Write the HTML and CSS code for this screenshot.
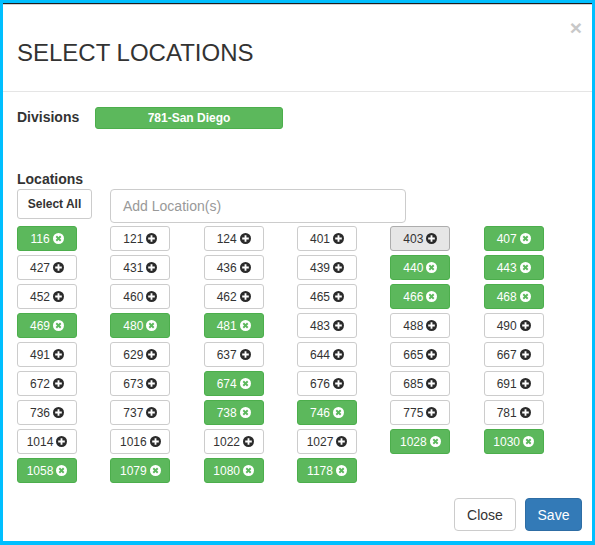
FILE: index.html
```html
<!DOCTYPE html>
<html>
<head>
<meta charset="utf-8">
<link rel="stylesheet" href="styles.css">
</head>
<body>
<svg class="defs" width="0" height="0" aria-hidden="true">
  <symbol id="plus" viewBox="0 0 12 12"><circle cx="6" cy="6" r="6" fill="#2a2a2a"/><path d="M5 2.4h2v2.6h2.6v2H7v2.6H5V7H2.4V5H5z" fill="#fff"/></symbol>
  <symbol id="rem" viewBox="0 0 12 12"><circle cx="6" cy="6" r="6" fill="#fff"/><path d="M3.6 3.6l4.8 4.8M8.4 3.6l-4.8 4.8" stroke="#5cb85c" stroke-width="2.1"/></symbol>
</svg>
<div class="modal">
  <div class="modal-header">
    <h4 class="modal-title">SELECT LOCATIONS</h4>
    <span class="close">&times;</span>
  </div>
  <div class="modal-body">
    <div class="div-row">
      <span class="label div-label">Divisions</span>
      <span class="btn-division">781-San Diego</span>
    </div>
    <div class="label loc-label">Locations</div>
    <div class="controls">
      <span class="btn-select">Select All</span>
      <div class="input">Add Location(s)</div>
    </div>
    <div class="grid">
      <span class="chip on">116<svg><use href="#rem"/></svg></span>
      <span class="chip">121<svg><use href="#plus"/></svg></span>
      <span class="chip">124<svg><use href="#plus"/></svg></span>
      <span class="chip">401<svg><use href="#plus"/></svg></span>
      <span class="chip active">403<svg><use href="#plus"/></svg></span>
      <span class="chip on">407<svg><use href="#rem"/></svg></span>

      <span class="chip">427<svg><use href="#plus"/></svg></span>
      <span class="chip">431<svg><use href="#plus"/></svg></span>
      <span class="chip">436<svg><use href="#plus"/></svg></span>
      <span class="chip">439<svg><use href="#plus"/></svg></span>
      <span class="chip on">440<svg><use href="#rem"/></svg></span>
      <span class="chip on">443<svg><use href="#rem"/></svg></span>

      <span class="chip">452<svg><use href="#plus"/></svg></span>
      <span class="chip">460<svg><use href="#plus"/></svg></span>
      <span class="chip">462<svg><use href="#plus"/></svg></span>
      <span class="chip">465<svg><use href="#plus"/></svg></span>
      <span class="chip on">466<svg><use href="#rem"/></svg></span>
      <span class="chip on">468<svg><use href="#rem"/></svg></span>

      <span class="chip on">469<svg><use href="#rem"/></svg></span>
      <span class="chip on">480<svg><use href="#rem"/></svg></span>
      <span class="chip on">481<svg><use href="#rem"/></svg></span>
      <span class="chip">483<svg><use href="#plus"/></svg></span>
      <span class="chip">488<svg><use href="#plus"/></svg></span>
      <span class="chip">490<svg><use href="#plus"/></svg></span>

      <span class="chip">491<svg><use href="#plus"/></svg></span>
      <span class="chip">629<svg><use href="#plus"/></svg></span>
      <span class="chip">637<svg><use href="#plus"/></svg></span>
      <span class="chip">644<svg><use href="#plus"/></svg></span>
      <span class="chip">665<svg><use href="#plus"/></svg></span>
      <span class="chip">667<svg><use href="#plus"/></svg></span>

      <span class="chip">672<svg><use href="#plus"/></svg></span>
      <span class="chip">673<svg><use href="#plus"/></svg></span>
      <span class="chip on">674<svg><use href="#rem"/></svg></span>
      <span class="chip">676<svg><use href="#plus"/></svg></span>
      <span class="chip">685<svg><use href="#plus"/></svg></span>
      <span class="chip">691<svg><use href="#plus"/></svg></span>

      <span class="chip">736<svg><use href="#plus"/></svg></span>
      <span class="chip">737<svg><use href="#plus"/></svg></span>
      <span class="chip on">738<svg><use href="#rem"/></svg></span>
      <span class="chip on">746<svg><use href="#rem"/></svg></span>
      <span class="chip">775<svg><use href="#plus"/></svg></span>
      <span class="chip">781<svg><use href="#plus"/></svg></span>

      <span class="chip">1014<svg><use href="#plus"/></svg></span>
      <span class="chip">1016<svg><use href="#plus"/></svg></span>
      <span class="chip">1022<svg><use href="#plus"/></svg></span>
      <span class="chip">1027<svg><use href="#plus"/></svg></span>
      <span class="chip on">1028<svg><use href="#rem"/></svg></span>
      <span class="chip on">1030<svg><use href="#rem"/></svg></span>

      <span class="chip on">1058<svg><use href="#rem"/></svg></span>
      <span class="chip on">1079<svg><use href="#rem"/></svg></span>
      <span class="chip on">1080<svg><use href="#rem"/></svg></span>
      <span class="chip on">1178<svg><use href="#rem"/></svg></span>
    </div>
  </div>
  <div class="modal-footer">
    <span class="btn btn-default">Close</span>
    <span class="btn btn-primary">Save</span>
  </div>
</div>
</body>
</html>
```
FILE: styles.css
```css
* { box-sizing: border-box; }
html, body { margin: 0; }
body {
  width: 595px;
  height: 545px;
  padding: 3px 3px 4px 3px;
  background: #00bfff;
  font-family: "Liberation Sans", Arial, sans-serif;
  color: #333;
  overflow: hidden;
}
.defs { position: absolute; width: 0; height: 0; }
.modal {
  width: 589px;
  height: 538px;
  background: #fff;
  border-top: 1px solid #1e1e1e;
  display: flex;
  flex-direction: column;
}
.modal-header {
  border-top: 1px solid #d2d2d2;
  border-bottom: 1px solid #e5e5e5;
  padding: 12px 10px 0 14px;
  display: flex;
  justify-content: space-between;
  align-items: flex-start;
}
.modal-title {
  margin: 23px 0 25px;
  font-size: 24px;
  line-height: 26px;
  font-weight: normal;
  color: #333;
}
.close {
  font-size: 21px;
  font-weight: bold;
  line-height: 21px;
  color: #c8c8c8;
}
.modal-body {
  padding: 15px 0 0 14px;
}
.label {
  font-size: 14px;
  font-weight: bold;
  line-height: 20px;
}
.div-row {
  display: flex;
  align-items: flex-start;
  height: 22px;
}
.div-label { width: 78px; }
.btn-division {
  width: 188px;
  height: 22px;
  background: #5cb85c;
  border: 1px solid #4cae4c;
  border-radius: 3px;
  color: #fff;
  font-size: 12px;
  font-weight: bold;
  display: flex;
  align-items: center;
  justify-content: center;
}
.loc-label {
  margin-top: 40px;
  margin-bottom: 0;
}
.controls {
  display: flex;
  align-items: flex-start;
  gap: 18px;
  height: 34px;
  margin-bottom: 3px;
}
.btn-select {
  width: 75px;
  height: 30px;
  border: 1px solid #ccc;
  border-radius: 3px;
  font-size: 12px;
  font-weight: bold;
  display: flex;
  align-items: center;
  justify-content: center;
  color: #333;
}
.input {
  width: 296px;
  height: 34px;
  border: 1px solid #ccc;
  border-radius: 4px;
  padding: 0 12px;
  font-size: 14px;
  color: #999;
  display: flex;
  align-items: center;
}
.grid {
  width: 560px;
  display: grid;
  grid-template-columns: repeat(6, 1fr);
  row-gap: 4px;
}
.chip {
  width: 60px;
  height: 25px;
  border: 1px solid #ccc;
  border-radius: 3px;
  background: #fff;
  color: #333;
  font-size: 12px;
  display: flex;
  align-items: center;
  justify-content: center;
  gap: 3px;
}
.chip svg {
  width: 11px;
  height: 11px;
}
.chip.on {
  background: #5cb85c;
  border-color: #4cae4c;
  color: #fff;
}
.chip.active {
  background: #e6e6e6;
  border-color: #adadad;
}
.modal-footer {
  margin-top: 15px;
  padding-right: 10px;
  display: flex;
  justify-content: flex-end;
  gap: 9px;
}
.btn {
  height: 33px;
  border-radius: 4px;
  font-size: 14px;
  display: flex;
  align-items: center;
  justify-content: center;
}
.btn-default {
  width: 62px;
  border: 1px solid #ccc;
  color: #333;
  background: #fff;
}
.btn-primary {
  width: 57px;
  border: 1px solid #2e6da4;
  background: #337ab7;
  color: #fff;
}
```
